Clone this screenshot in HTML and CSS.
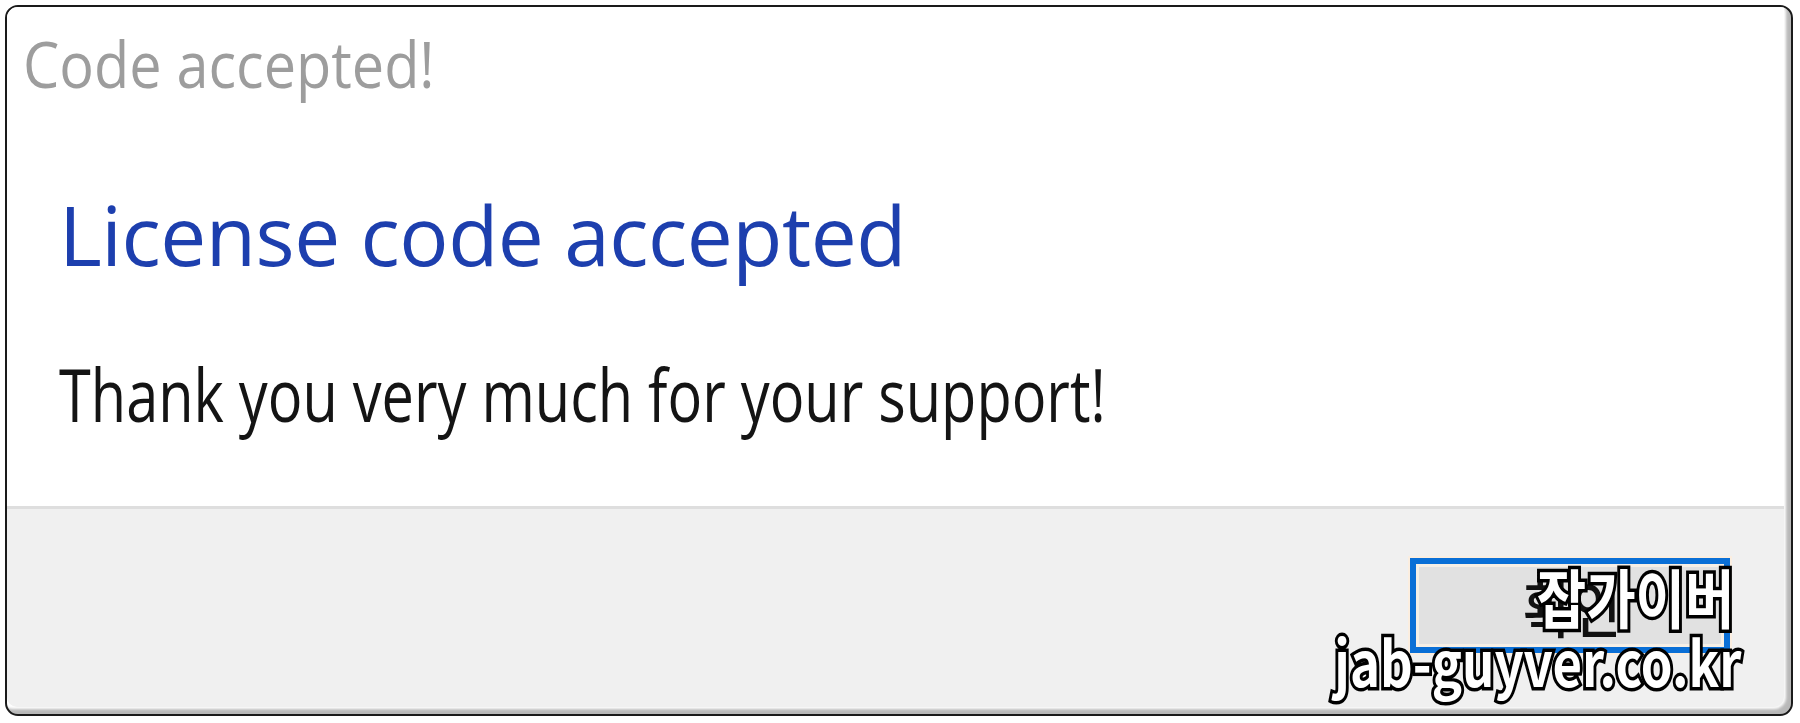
FILE: index.html
```html
<!DOCTYPE html>
<html lang="en">
<head>
<meta charset="utf-8">
<title>Code accepted!</title>
<link rel="stylesheet" href="styles.css">
</head>
<body>
<div class="window">
  <div class="content">
    <div class="title"><span class="squeeze-title">Code accepted!</span></div>
    <div class="main">
      <div class="instruction">License code accepted</div>
      <div class="message"><span class="squeeze-msg">Thank you very much for your support!</span></div>
    </div>
  </div>
  <div class="footer">
    <button class="ok"><span class="ok-label">확인</span></button>
  </div>
  <div class="watermark">
    <div class="wm-ko">잡가이버</div>
    <div class="wm-url">jab-guyver.co.kr</div>
  </div>
</div>
</body>
</html>
```
FILE: styles.css
```css
html, body {
  margin: 0;
  padding: 0;
  background: #ffffff;
}
body {
  width: 1800px;
  height: 723px;
  overflow: hidden;
  font-family: "Open Sans", "Noto Sans CJK KR", sans-serif;
}
.window {
  position: relative;
  margin: 5px 0 0 5px;
  width: 1788px;
  height: 711px;
  box-sizing: border-box;
  border: 2px solid #1a1a1a;
  border-radius: 13px;
  overflow: hidden;
  display: flex;
  flex-direction: column;
  background: #ffffff;
  box-shadow: inset -6px -6px 3px -1px rgba(0, 0, 0, 0.28);
}
.content {
  height: 499px;
  padding: 25px 0 0 0;
  box-sizing: border-box;
  background: #ffffff;
  margin-right: 7px;
}
.title {
  font-size: 64px;
  line-height: 1;
  color: #9d9d9d;
  margin-left: 16px;
  white-space: nowrap;
}
.squeeze-title {
  display: inline-block;
  transform: scaleX(0.9);
  transform-origin: left center;
}
.main {
  padding-left: 52px;
}
.instruction {
  margin-top: 97px;
  font-size: 82px;
  line-height: 1;
  color: #1d3fae;
  letter-spacing: -0.5px;
}
.message {
  margin-top: 82px;
  font-size: 73px;
  line-height: 1;
  color: #141414;
  white-space: nowrap;
}
.squeeze-msg {
  display: inline-block;
  transform: scaleX(0.79);
  transform-origin: left center;
}
.footer {
  flex: 1;
  margin: 0 7px 7px 0;
  border-top: 3px solid #dedede;
  background: #f0f0f0;
  display: flex;
  justify-content: flex-end;
  align-items: flex-start;
  padding: 49px 54px 0 0;
  border-bottom-left-radius: 10px;
  border-bottom-right-radius: 10px;
}
.ok {
  width: 320px;
  height: 95px;
  box-sizing: border-box;
  border: 6px solid #0a6fd6;
  outline: 2px solid #fbeee0;
  background: #e1e1e1;
  box-shadow: inset 0 0 0 3px #f6efe6;
  font-family: "Noto Sans CJK KR", sans-serif;
  font-weight: 500;
  font-size: 62px;
  color: #111111;
  padding: 0;
  line-height: 1;
  display: flex;
  align-items: center;
  justify-content: center;
}
.ok-label {
  display: inline-block;
  transform: scaleX(0.86);
  margin-left: 4px;
}
.watermark {
  position: absolute;
  right: 58px;
  bottom: 23px;
  display: flex;
  flex-direction: column;
  align-items: flex-end;
  font-family: "Noto Sans CJK KR", sans-serif;
  font-weight: 700;
  color: #ffffff;
  -webkit-text-stroke: 7px #000000;
  paint-order: stroke fill;
  line-height: 1;
}
.wm-ko {
  font-size: 64px;
  letter-spacing: 0;
  transform: scaleX(0.84);
  transform-origin: right center;
  margin-right: -2px;
}
.wm-url {
  font-size: 62px;
  margin-top: 2px;
  transform: scaleX(0.82);
  transform-origin: right center;
  margin-right: -8px;
}
```
